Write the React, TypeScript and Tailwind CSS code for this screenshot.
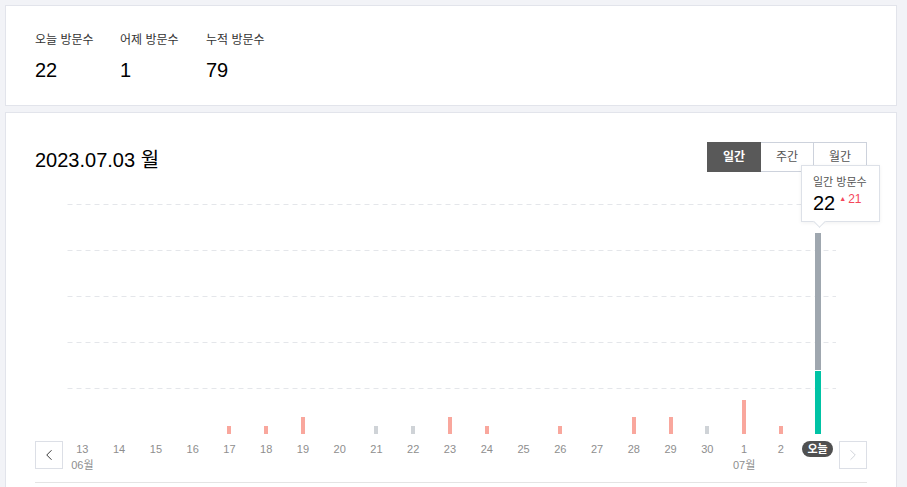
import { ChevronLeft, ChevronRight } from 'lucide-react'

// 방문자 통계 — 요약 카드 + 일간 막대 차트

type Day = {
  label: string
  month?: string
  value: number
  tone: 'red' | 'gray' | 'none'
}

const days: Day[] = [
  { label: '13', month: '06월', value: 0, tone: 'none' },
  { label: '14', value: 0, tone: 'none' },
  { label: '15', value: 0, tone: 'none' },
  { label: '16', value: 0, tone: 'none' },
  { label: '17', value: 1, tone: 'red' },
  { label: '18', value: 1, tone: 'red' },
  { label: '19', value: 2, tone: 'red' },
  { label: '20', value: 0, tone: 'none' },
  { label: '21', value: 1, tone: 'gray' },
  { label: '22', value: 1, tone: 'gray' },
  { label: '23', value: 2, tone: 'red' },
  { label: '24', value: 1, tone: 'red' },
  { label: '25', value: 0, tone: 'none' },
  { label: '26', value: 1, tone: 'red' },
  { label: '27', value: 0, tone: 'none' },
  { label: '28', value: 2, tone: 'red' },
  { label: '29', value: 2, tone: 'red' },
  { label: '30', value: 1, tone: 'gray' },
  { label: '1', month: '07월', value: 4, tone: 'red' },
  { label: '2', value: 1, tone: 'red' },
]

function barHeight(value: number): number {
  if (value <= 0) return 0
  return Math.round(value * 8.8) - 1
}

const stats = [
  { label: '오늘 방문수', value: '22' },
  { label: '어제 방문수', value: '1' },
  { label: '누적 방문수', value: '79' },
]

function Tabs() {
  return (
    <div className="flex h-[30px] text-[12px]">
      <button className="w-[54px] bg-[#595959] border border-[#595959] text-white font-bold">일간</button>
      <button className="w-[53px] bg-white border border-l-0 border-[#cdd2dc] text-[#555]">주간</button>
      <button className="w-[53px] bg-white border border-l-0 border-[#cdd2dc] text-[#555]">월간</button>
    </div>
  )
}

function Tooltip() {
  return (
    <div className="absolute left-[737px] top-[-7px] w-[79px] h-[57px] bg-white border border-[#dde1e8] shadow-[0_1px_4px_rgba(0,0,0,0.06)] pl-[11px] pt-[9px] z-10">
      <div className="text-[11px] leading-[15px] text-[#555]">일간 방문수</div>
      <div className="flex items-start gap-[4px]">
        <span className="text-[20px] leading-[26px] text-black">22</span>
        <span className="flex items-center text-[12px] leading-[14px] text-[#f5475a] mt-[2px]">
          <span className="text-[7px] mr-[2px]">▲</span>21
        </span>
      </div>
      <div className="absolute left-[13px] bottom-[-5px] w-[9px] h-[9px] bg-white border-r border-b border-[#dde1e8] rotate-45" />
    </div>
  )
}

function Chart() {
  return (
    <div className="w-[772px] ml-[1px] mr-[3px]">
      <div className="relative h-[262px]">
        <div className="flex flex-col pt-[32px]">
          {[0, 1, 2, 3, 4].map((i) => (
            <div
              key={i}
              className="h-[46px] bg-[linear-gradient(to_right,#e4e6ea_55%,transparent_55%)] bg-[length:9px_1px] bg-repeat-x bg-top"
            />
          ))}
        </div>
        <div className="absolute inset-0 grid grid-cols-[repeat(21,1fr)] items-end">
          {days.map((d) => (
            <div key={d.label} className="flex justify-center">
              {d.tone !== 'none' && (
                <div
                  className={d.tone === 'red' ? 'w-[4px] bg-[#f9a79d]' : 'w-[4px] bg-[#cfd3d7]'}
                  style={{ height: barHeight(d.value) }}
                />
              )}
            </div>
          ))}
          <div className="flex flex-col items-center">
            <div className="w-[6px] h-[137px] bg-[#9fa7af]" />
            <div className="w-[6px] h-[63px] mt-[1px] bg-[#00c3a5]" />
          </div>
        </div>
        <Tooltip />
      </div>
      <div className="grid grid-cols-[repeat(21,1fr)] pt-[7px] pb-[9px] text-[11px] leading-[16px] text-[#8e8e8e]">
        {days.map((d) => (
          <div key={d.label} className="flex flex-col items-center">
            <span>{d.label}</span>
            <span className="h-[16px]">{d.month ?? ''}</span>
          </div>
        ))}
        <div className="flex flex-col items-center">
          <span className="px-[5px] rounded-full bg-[#505050] text-white font-bold">오늘</span>
        </div>
      </div>
    </div>
  )
}

export default function App() {
  return (
    <div
      className="min-h-[487px] bg-[#f2f3f7] pt-[5px] pl-[5px] pr-[10px] pb-[10px] text-[#222]"
      style={{ fontFamily: '"Liberation Sans", "Noto Sans CJK KR", sans-serif' }}
    >
      <div className="h-[101px] bg-white border border-[#e2e4eb] pl-[29px] pt-[25px]">
        <div className="grid grid-cols-[85px_86px_auto]">
          {stats.map((s) => (
            <div key={s.label}>
              <div className="text-[12px] leading-[18px] text-[#333]">{s.label}</div>
              <div className="mt-[7px] text-[20px] leading-[28px] text-black">{s.value}</div>
            </div>
          ))}
        </div>
      </div>

      <div className="mt-[6px] bg-white border border-[#e2e4eb] px-[29px] pt-[29px] h-[400px]">
        <div className="flex items-center justify-between h-[30px]">
          <h2 className="text-[20px] leading-[28px] text-black mt-[5px]">2023.07.03 월</h2>
          <Tabs />
        </div>
        <div className="flex items-end border-b border-[#e4e4e4]">
          <button className="w-[28px] h-[28px] mb-[13px] border border-[#dcdfe6] flex items-center justify-center text-[#333]">
            <ChevronLeft size={18} strokeWidth={1.3} />
          </button>
          <Chart />
          <button className="w-[28px] h-[28px] mb-[13px] border border-[#dcdfe6] flex items-center justify-center text-[#cfd2d8]">
            <ChevronRight size={18} strokeWidth={1.3} />
          </button>
        </div>
      </div>
    </div>
  )
}
